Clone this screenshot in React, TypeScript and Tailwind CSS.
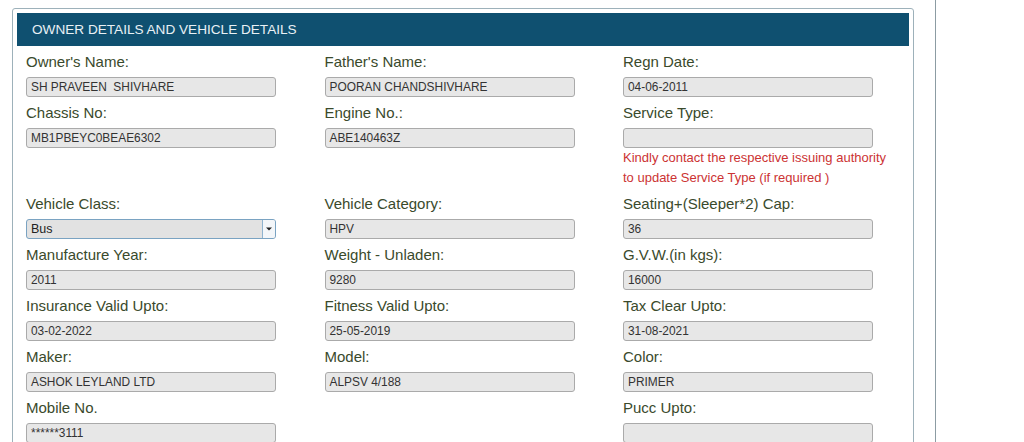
import React from "react";

type Field = { label: string; value?: string; select?: boolean; note?: boolean; empty?: boolean };

const fields: Field[] = [
  { label: "Owner's Name:", value: "SH PRAVEEN  SHIVHARE" },
  { label: "Father's Name:", value: "POORAN CHANDSHIVHARE" },
  { label: "Regn Date:", value: "04-06-2011" },
  { label: "Chassis No:", value: "MB1PBEYC0BEAE6302" },
  { label: "Engine No.:", value: "ABE140463Z" },
  { label: "Service Type:", value: "", note: true },
  { label: "Vehicle Class:", value: "Bus", select: true },
  { label: "Vehicle Category:", value: "HPV" },
  { label: "Seating+(Sleeper*2) Cap:", value: "36" },
  { label: "Manufacture Year:", value: "2011" },
  { label: "Weight - Unladen:", value: "9280" },
  { label: "G.V.W.(in kgs):", value: "16000" },
  { label: "Insurance Valid Upto:", value: "03-02-2022" },
  { label: "Fitness Valid Upto:", value: "25-05-2019" },
  { label: "Tax Clear Upto:", value: "31-08-2021" },
  { label: "Maker:", value: "ASHOK LEYLAND LTD" },
  { label: "Model:", value: "ALPSV 4/188" },
  { label: "Color:", value: "PRIMER" },
  { label: "Mobile No.", value: "******3111" },
  { label: "", empty: true },
  { label: "Pucc Upto:", value: "" },
];

function Cell({ f }: { f: Field }) {
  if (f.empty) return <div />;
  return (
    <div className="flex flex-col">
      <div className="h-[20px] leading-[20px] text-[15px] text-[#3a4a2c] mb-[5px] whitespace-nowrap">{f.label}</div>
      {f.select ? (
        <div className="h-[20px] w-[250px] flex items-stretch rounded-[3px] border border-[#7aa3c2] bg-[#e2e2e2]">
          <div className="flex-1 pl-[4px] text-[12.5px] leading-[18px] text-[#222]">{f.value}</div>
          <div className="w-[13px] flex items-center justify-center border-l border-[#8fb3cf] bg-[#f3f6f9] rounded-r-[2px]">
            <svg width="6" height="4" viewBox="0 0 6 4"><path d="M0 0.5 L6 0.5 L3 3.5 Z" fill="#222" /></svg>
          </div>
        </div>
      ) : (
        <div className="h-[20px] w-[250px] rounded-[3px] border border-[#aaaaaa] bg-[#e7e7e7] pl-[4px] text-[11.9px] leading-[18px] text-[#333] whitespace-pre">
          {f.value}
        </div>
      )}
      {f.note && (
        <div className="text-[13px] leading-[20px] text-[#cc3333] whitespace-nowrap">
          <div>Kindly contact the respective issuing authority</div>
          <div>to update Service Type (if required )</div>
        </div>
      )}
    </div>
  );
}

export default function App() {
  return (
    <div className="h-[442px] w-[1024px] overflow-hidden bg-white flex" style={{ fontFamily: '"Liberation Sans", Arial, sans-serif' }}>
      <div className="ml-[12px] mt-[8px] w-[902px] h-[460px] shrink-0 border border-[#9db1ba] rounded-[3px] pt-[4px] px-[4px]">
        <div className="h-[33px] bg-[#0f5070] text-[#e9f1f5] text-[13.6px] leading-[33px] pl-[15px] whitespace-nowrap">
          OWNER DETAILS AND VEHICLE DETAILS
        </div>
        <div className="mt-[6px] ml-[9px] grid grid-cols-[250px_250px_250px] gap-x-[48.5px] gap-y-[6px]">
          {fields.map((f, i) => (
            <Cell key={i} f={f} />
          ))}
        </div>
      </div>
      <div className="ml-[21px] w-0 h-full border-l border-[#8c9ca3]" />
    </div>
  );
}
